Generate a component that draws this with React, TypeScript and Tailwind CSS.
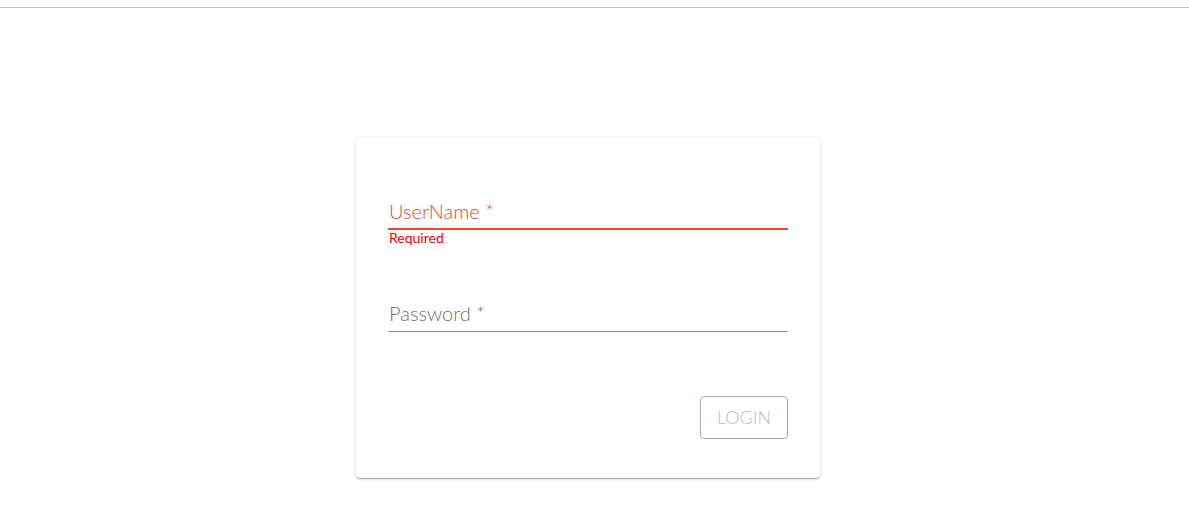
import React from "react";

export default function App() {
  return (
    <div className="min-h-[529px] bg-white" style={{ fontFamily: "Lato, 'Liberation Sans', sans-serif" }}>
      <div className="h-[8px] border-b border-[#c4c4c4]" />
      <div className="ml-[356px] mt-[129px] w-[464px] rounded-[4px] bg-white px-8 pt-[62px] pb-[39px] shadow-[0_1px_3px_rgba(0,0,0,0.2),0_1px_1px_rgba(0,0,0,0.14),0_2px_1px_-1px_rgba(0,0,0,0.12)]">
        <div>
          <div className="border-b-2 border-[#f44336] pb-[5px] pl-[1px] text-[20px] font-light leading-[24px] text-[#f44336]">
            UserName&nbsp;*
          </div>
          <div className="h-[16px] pl-[1px] text-[14px] leading-[16px] text-[#ff0000]">Required</div>
        </div>
        <div className="mt-[55px]">
          <div className="border-b border-[#8c8c8c] pb-[6px] pl-[1px] text-[20px] font-light leading-[24px] text-[#6f6f6f]">
            Password *
          </div>
        </div>
        <div className="mt-[64px] flex justify-end">
          <button className="flex h-[43px] w-[88px] items-center justify-center rounded-[4px] border border-[#9fa8da] text-[18px] font-light text-[#bdbdbd]">
            LOGIN
          </button>
        </div>
      </div>
    </div>
  );
}
